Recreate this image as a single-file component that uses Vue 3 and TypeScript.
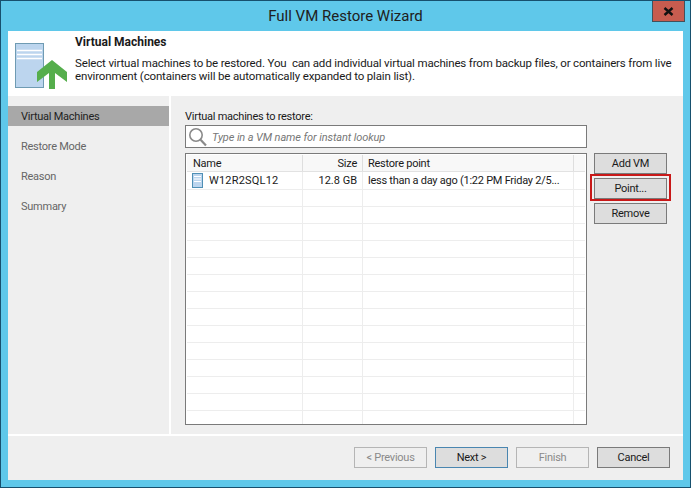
<script setup lang="ts">
const steps = ['Virtual Machines', 'Restore Mode', 'Reason', 'Summary']
const emptyRows = Array.from({ length: 14 }, (_, i) => i)
</script>

<template>
  <div class="window">
    <div class="titlebar">
      <span class="title">Full VM Restore Wizard</span>
      <button class="close">
        <svg width="11" height="9" viewBox="0 0 11 9"><path d="M1.5 1 L9.5 8 M9.5 1 L1.5 8" stroke="#111" stroke-width="2.4" fill="none" /></svg>
      </button>
    </div>
    <div class="client">
      <header class="head">
        <svg class="head-icon" width="54" height="48" viewBox="0 0 54 48">
          <rect x="0.5" y="0.5" width="28" height="44" fill="#bcd5ee" stroke="#6f9bb3" />
          <path d="M2 7.5H27M2 11.5H27M2 15.5H27" stroke="#fff" stroke-width="1.6" />
          <path d="M37 17 L52 29 V39 L40 30 V46 H34 V30 L22 39 V29 Z" fill="#55ae4c" />
        </svg>
        <div class="head-text">
          <div class="head-title">Virtual Machines</div>
          <p class="head-desc">Select virtual machines to be restored. You&nbsp; can add individual virtual machines from backup files, or containers from live environment (containers will be automatically expanded to plain list).</p>
        </div>
      </header>
      <div class="middle">
        <nav class="nav">
          <div v-for="(s, i) in steps" :key="s" class="step" :class="{ active: i === 0 }">{{ s }}</div>
        </nav>
        <main class="main">
          <label class="lbl">Virtual machines to restore:</label>
          <div class="search">
            <svg width="20" height="20" viewBox="0 0 20 20">
              <circle cx="8" cy="8" r="6.2" fill="none" stroke="#8a8a8a" stroke-width="1.6" />
              <path d="M12.6 12.8 L18 18.4" stroke="#8a8a8a" stroke-width="2.2" />
            </svg>
            <span class="placeholder">Type in a VM name for instant lookup</span>
          </div>
          <div class="body-row">
            <div class="list">
              <div class="row header">
                <div class="c c1">Name</div>
                <div class="c c2">Size</div>
                <div class="c c3">Restore point</div>
                <div class="c c4"></div>
              </div>
              <div class="row item">
                <div class="c c1 name">
                  <svg width="11" height="15" viewBox="0 0 11 15">
                    <rect x="0.5" y="0.5" width="10" height="14" fill="#bcd5ee" stroke="#4f8fb5" />
                    <path d="M2 3.5H9M2 6H9M2 8.5H9" stroke="#fff" stroke-width="1.2" />
                  </svg>
                  <span class="host">W12R2SQL12</span>
                </div>
                <div class="c c2 plain">12.8 GB</div>
                <div class="c c3">less than a day ago (1:22 PM Friday 2/5...</div>
                <div class="c c4"></div>
              </div>
              <div v-for="r in emptyRows" :key="r" class="row">
                <div class="c c1"></div>
                <div class="c c2"></div>
                <div class="c c3"></div>
                <div class="c c4"></div>
              </div>
            </div>
            <div class="side">
              <button class="btn">Add VM</button>
              <div class="highlight"><button class="btn">Point...</button></div>
              <button class="btn">Remove</button>
            </div>
          </div>
        </main>
      </div>
      <footer class="foot">
        <button class="btn off">&lt; Previous</button>
        <button class="btn next">Next &gt;</button>
        <button class="btn off">Finish</button>
        <button class="btn">Cancel</button>
      </footer>
    </div>
  </div>
</template>

<style>
html, body { margin: 0; padding: 0; }
</style>

<style scoped>
.window {
  width: 691px;
  height: 488px;
  box-sizing: border-box;
  border: 1px solid #17506e;
  background: #5fc8ea;
  display: flex;
  flex-direction: column;
  padding: 0 7px 7px;
  font-family: Roboto, "Noto Sans", sans-serif;
  font-size: 11px;
  letter-spacing: -0.25px;
  color: #1a1a1a;
  overflow: hidden;
}
.titlebar {
  height: 30px;
  flex: none;
  display: flex;
  align-items: center;
  justify-content: center;
  position: relative;
}
.title { font-size: 15px; letter-spacing: 0; color: #202020; }
.close {
  position: absolute;
  right: -2px;
  top: 0;
  width: 33px;
  height: 21px;
  padding: 0;
  background: #c75c4f;
  border: 1px solid #43505a;
  border-top: 0;
  display: flex;
  align-items: center;
  justify-content: center;
}
.client { flex: 1; min-height: 0; display: flex; flex-direction: column; background: #efefef; }
.head { height: 65px; flex: none; background: #fff; display: flex; box-sizing: border-box; padding: 12px 0 0 7px; }
.head-icon { flex: none; }
.head-text { margin-left: 6px; margin-top: -9px; }
.head-title { font-weight: 700; font-size: 12px; letter-spacing: 0; line-height: 16px; }
.head-desc { margin: 7px 0 0; width: 605px; font-size: 11.5px; letter-spacing: -0.15px; line-height: 13px; }
.middle { flex: 1; min-height: 0; display: flex; border-bottom: 2px solid #fff; }
.nav { width: 161px; flex: none; border-right: 2px solid #fff; padding-top: 10px; }
.step { height: 20px; line-height: 22px; padding-left: 13px; margin-bottom: 10px; color: #666; }
.step.active { background: #a8a8a8; color: #222; }
.main { flex: 1; padding: 12px 12px 0 14px; min-width: 0; }
.lbl { display: block; line-height: 17px; height: 17px; }
.search {
  width: 402px;
  height: 23px;
  box-sizing: border-box;
  border: 1px solid #7a7a7a;
  background: #fff;
  display: flex;
  align-items: center;
  padding-left: 2px;
  gap: 4px;
}
.placeholder { font-style: italic; color: #777; letter-spacing: -0.1px; line-height: 23px; padding-top: 2px; }
.body-row { display: flex; margin-top: 5px; align-items: flex-start; }
.list {
  width: 402px;
  height: 272px;
  box-sizing: border-box;
  border: 1px solid #7a7a7a;
  background: #fff;
  padding: 1px;
  overflow: hidden;
}
.row { display: flex; height: 17px; box-sizing: border-box; border-bottom: 1px solid #ededed; line-height: 17px; }
.row.header { border-bottom: 1px solid #e2e2e2; background: #f8f8f8; line-height: 18px; }
.c { box-sizing: border-box; border-right: 1px solid #ededed; white-space: nowrap; overflow: hidden; }
.c1 { width: 116px; padding-left: 6px; }
.c2 { width: 60px; text-align: right; padding-right: 5px; }
.c3 { width: 211px; padding-left: 5px; }
.c4 { flex: 1; border-right: 0; }
.header .c { border-right-color: #dedede; }
.row.item { height: 18px; line-height: 18px; }
.plain { letter-spacing: 0; }
.host { letter-spacing: 0.2px; }
.name { display: flex; align-items: center; gap: 6px; padding-left: 5px; }
.side { display: flex; flex-direction: column; margin-left: 7px; }
.btn {
  width: 73px;
  height: 21px;
  box-sizing: border-box;
  padding: 0;
  background: #dddddd;
  border: 1px solid #7a7a7a;
  font-family: inherit;
  font-size: 11px;
  letter-spacing: -0.25px;
  color: #1a1a1a;
  display: block;
}
.highlight { border: 2px solid #c81818; margin: 0 -4px 2px; padding: 2px; box-sizing: border-box; width: 81px; height: 27px; }
.foot { height: 44px; flex: none; display: flex; justify-content: flex-end; align-items: flex-start; gap: 8px; padding: 11px 13px 0 0; box-sizing: border-box; }
.btn.off { background: #efefef; border-color: #b5b5b5; color: #8a8a8a; }
.btn.next { border-color: #4a86b0; }
</style>
